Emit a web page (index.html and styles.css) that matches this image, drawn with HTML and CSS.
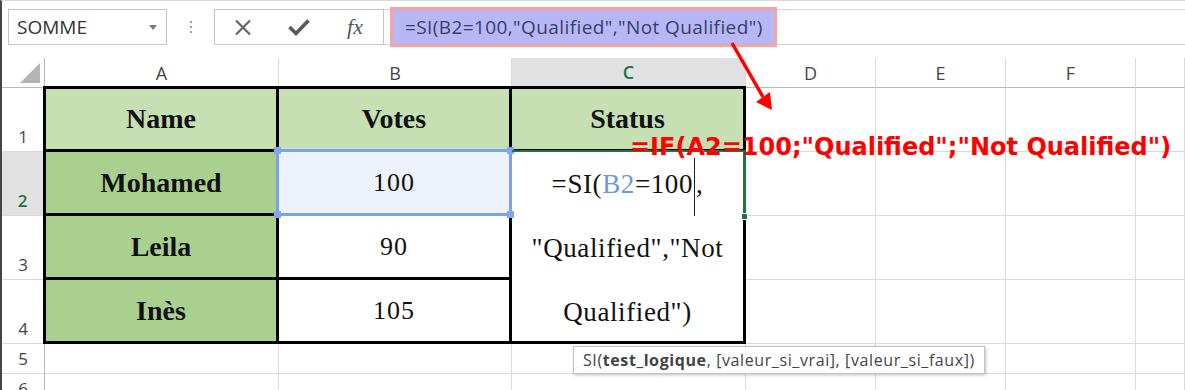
FILE: index.html
```html
<!DOCTYPE html>
<html lang="fr">

<head>
    <meta charset="UTF-8">
    <title>Fonction SI</title>
    <link rel="stylesheet" href="styles.css">
</head>

<body>
    <div class="window">

        <!-- Barre de formule -->
        <div class="formula-bar">
            <div class="name-box">
                <span>SOMME</span>
                <span class="caret"></span>
            </div>
            <div class="grip"><i></i><i></i><i></i></div>
            <div class="buttons">
                <span class="btn">
                    <svg width="18" height="17" viewBox="0 0 18 17">
                        <path d="M2 1.5 L16 15.5 M16 1.5 L2 15.5" stroke="#666" stroke-width="2.2" fill="none"/>
                    </svg>
                </span>
                <span class="btn">
                    <svg width="22" height="17" viewBox="0 0 22 17">
                        <path d="M1.5 8 L8 14.5 L20.5 1.5" stroke="#5a5a5a" stroke-width="3.6" fill="none"/>
                    </svg>
                </span>
                <span class="btn fx">fx</span>
            </div>
            <div class="formula-field">
                <span class="formula">=SI(B2=100,"Qualified","Not Qualified")</span>
            </div>
        </div>

        <!-- Feuille -->
        <div class="sheet">
            <div class="corner">
                <svg width="20" height="20" viewBox="0 0 20 20"><polygon points="20,0 20,20 0,20" fill="#b4b4b4"/></svg>
            </div>
            <div class="col-head">A</div>
            <div class="col-head">B</div>
            <div class="col-head active">C</div>
            <div class="col-head">D</div>
            <div class="col-head">E</div>
            <div class="col-head">F</div>
            <div class="col-head"></div>

            <div class="row-head">1</div>
            <div class="t label top first">Name</div>
            <div class="t label top">Votes</div>
            <div class="t label top">Status</div>
            <div class="cell"></div>
            <div class="cell"></div>
            <div class="cell"></div>
            <div class="cell"></div>

            <div class="row-head active">2</div>
            <div class="t name first">Mohamed</div>
            <div class="t num sel">
                100
                <span class="sel-box">
                    <span class="handle tl"></span>
                    <span class="handle tr"></span>
                    <span class="handle bl"></span>
                    <span class="handle br"></span>
                </span>
            </div>
            <div class="edit">
                <span class="active-box"><span class="fill-handle"></span></span>
                =SI(<span class="ref">B2</span>=100<span class="cursor"></span>,<br>"Qualified","Not<br>Qualified")
            </div>
            <div class="cell"></div>
            <div class="cell"></div>
            <div class="cell"></div>
            <div class="cell"></div>

            <div class="row-head">3</div>
            <div class="t name first">Leila</div>
            <div class="t num">90</div>
            <div class="cell"></div>
            <div class="cell"></div>
            <div class="cell"></div>
            <div class="cell"></div>

            <div class="row-head">4</div>
            <div class="t name first">Inès</div>
            <div class="t num">105</div>
            <div class="cell"></div>
            <div class="cell"></div>
            <div class="cell"></div>
            <div class="cell"></div>

            <div class="row-head">5</div>
            <div class="cell"></div>
            <div class="cell"></div>
            <div class="cell"></div>
            <div class="cell"></div>
            <div class="cell"></div>
            <div class="cell"></div>
            <div class="cell"></div>

            <div class="row-head">6</div>
            <div class="cell"></div>
            <div class="cell"></div>
            <div class="cell"></div>
            <div class="cell"></div>
            <div class="cell"></div>
            <div class="cell"></div>
            <div class="cell"></div>
        </div>

        <!-- Annotations -->
        <svg class="arrow" width="55" height="78" viewBox="0 0 55 78">
            <line x1="7" y1="5" x2="38" y2="59" stroke="#ff0000" stroke-width="3.5"/>
            <polygon points="47,72 31,64 45,54" fill="#ff0000"/>
        </svg>
        <div class="note">=IF(A2=100;"Qualified";"Not Qualified")</div>
        <div class="tooltip">SI(<b>test_logique</b>, [valeur_si_vrai], [valeur_si_faux])</div>
    </div>
</body>

</html>
```

FILE: styles.css
```css
* {
    box-sizing: border-box;
}

body {
    margin: 0;
    background-color: #fff;
    font-family: "Open Sans", "Noto Sans", sans-serif;
    color: #444;
}

.window {
    position: relative;
    height: 390px;
    overflow: hidden;
    border-left: 2px solid #454545;
    border-top: 1px solid #dadada;
}

/* Barre de formule */
.formula-bar {
    display: flex;
    align-items: center;
    height: 36px;
    margin-top: 8px;
}

.name-box {
    display: flex;
    align-items: center;
    justify-content: space-between;
    width: 159px;
    height: 36px;
    margin-left: 6px;
    padding: 0 9px 0 8px;
    border: 1px solid #c6c6c6;
    font-size: 19px;
    color: #333;
}

.caret {
    width: 0;
    height: 0;
    border-left: 4.5px solid transparent;
    border-right: 4.5px solid transparent;
    border-top: 5px solid #7a7a7a;
}

.grip {
    display: flex;
    flex-direction: column;
    align-items: center;
    gap: 3px;
    width: 47px;
}

.grip i {
    width: 2px;
    height: 2px;
    background-color: #a0a0a0;
}

.buttons {
    display: flex;
    align-items: center;
    width: 170px;
    height: 36px;
    border: 1px solid #c6c6c6;
}

.btn {
    display: flex;
    align-items: center;
    justify-content: center;
    width: 56px;
}

.fx {
    font-family: "Liberation Serif", serif;
    font-style: italic;
    font-size: 22px;
    color: #555;
}

.formula-field {
    flex: 1;
    display: flex;
    align-items: center;
    height: 36px;
    padding-left: 6px;
    border-top: 1px solid #d4d4d4;
    border-bottom: 1px solid #d4d4d4;
}

.formula {
    display: flex;
    align-items: center;
    width: 387px;
    height: 40px;
    padding-left: 12px;
    border: 3px solid #f5a4a4;
    background-color: #b7b7f6;
    color: #3b3b6e;
    font-size: 19px;
    letter-spacing: 0.4px;
    white-space: nowrap;
}

/* Feuille */
.sheet {
    display: grid;
    grid-template-columns: 43px 234px 233px 234px 130px 130px 130px 1fr;
    grid-template-rows: 30px 64px 64px 64px 64px 30px 30px;
    margin-top: 13px;
}

.cell {
    border-right: 1px solid #dadada;
    border-bottom: 1px solid #dadada;
}

.corner {
    display: flex;
    align-items: flex-end;
    justify-content: flex-end;
    padding: 0 4px 4px 0;
    border-right: 1px solid #b9b9b9;
    border-bottom: 1px solid #b9b9b9;
}

.col-head {
    display: flex;
    align-items: center;
    justify-content: center;
    font-size: 18px;
    border-right: 1px solid #dadada;
    border-bottom: 1px solid #b9b9b9;
}

.col-head.active {
    background-color: #e1e1e1;
    color: #217346;
    font-weight: 600;
    border-bottom: 2px solid #217346;
}

.row-head {
    display: flex;
    align-items: flex-end;
    justify-content: center;
    padding-bottom: 6px;
    font-size: 17px;
    line-height: 17px;
    border-right: 1px solid #b9b9b9;
    border-bottom: 1px solid #dadada;
}

.row-head.active {
    background-color: #e1e1e1;
    color: #217346;
    font-weight: 600;
    border-right: 2px solid #217346;
}

/* Tableau */
.t {
    display: flex;
    align-items: center;
    justify-content: center;
    font-family: "Liberation Serif", serif;
    color: #111;
    border-right: 3px solid #000;
    border-bottom: 3px solid #000;
}

.t.top {
    border-top: 3px solid #000;
    margin-top: -2px;
}

.t.first {
    border-left: 3px solid #000;
    margin-left: -2px;
}

.label {
    background-color: #c6e0b4;
    font-weight: bold;
    font-size: 28px;
}

.name {
    background-color: #a9d08e;
    font-weight: bold;
    font-size: 28px;
}

.num {
    font-size: 26px;
    letter-spacing: 1px;
    background-color: #fff;
}

.sel {
    position: relative;
    background-color: #edf2fc;
}

.sel-box {
    position: absolute;
    top: -3px;
    left: -3px;
    right: -3px;
    bottom: -3px;
    z-index: 2;
    border: 3px solid #7ca2ea;
}

.handle {
    position: absolute;
    width: 7px;
    height: 7px;
    background-color: #80a6ee;
}

.handle.tl { top: -5px; left: -5px; }
.handle.tr { top: -5px; right: -5px; }
.handle.bl { bottom: -5px; left: -5px; }
.handle.br { bottom: -5px; right: -5px; }

.edit {
    position: relative;
    grid-row: span 3;
    background-color: #fff;
    font-family: "Liberation Serif", serif;
    font-size: 27px;
    line-height: 64px;
    letter-spacing: 0.6px;
    text-align: center;
    color: #111;
    border-right: 3px solid #000;
    border-bottom: 3px solid #000;
}

.ref {
    color: #6f94e8;
}

.cursor {
    display: inline-block;
    width: 1px;
    height: 58px;
    margin: 0 1px;
    background-color: #222;
    vertical-align: middle;
}

.active-box {
    position: absolute;
    top: -2px;
    left: 0;
    right: -3px;
    height: 66px;
    z-index: 2;
    border-top: 2px solid #217346;
    border-right: 3px solid #217346;
}

.fill-handle {
    position: absolute;
    right: -5px;
    bottom: -4px;
    width: 7px;
    height: 7px;
    background-color: #217346;
    border: 1px solid #fff;
}

/* Annotations */
.arrow {
    position: absolute;
    left: 723px;
    top: 37px;
    z-index: 3;
}

.note {
    position: absolute;
    left: 628px;
    top: 134px;
    z-index: 3;
    font-family: "DejaVu Sans", sans-serif;
    font-weight: bold;
    font-size: 24px;
    line-height: 1;
    color: #ff0000;
    white-space: nowrap;
}

.tooltip {
    position: absolute;
    left: 571px;
    top: 345px;
    z-index: 3;
    padding: 0 9px;
    line-height: 26px;
    font-size: 16px;
    letter-spacing: 0.6px;
    color: #444;
    background-color: #fff;
    border: 1px solid #c3c3c3;
    box-shadow: 1px 1px 3px rgba(0, 0, 0, 0.25);
    white-space: nowrap;
}
```
